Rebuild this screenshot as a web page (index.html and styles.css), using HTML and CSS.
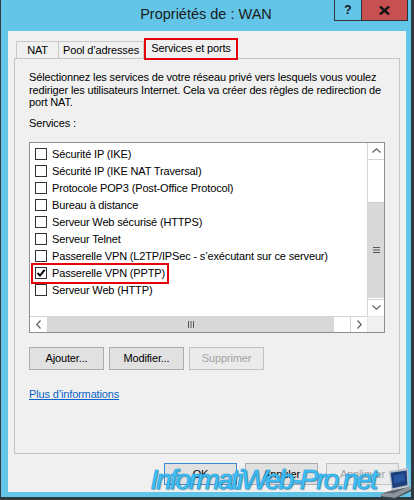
FILE: index.html
```html
<!DOCTYPE html>
<html lang="fr">
<head>
<meta charset="utf-8">
<title>Propriétés de : WAN</title>
<link rel="stylesheet" href="styles.css">
</head>
<body>
<div class="window">
  <div class="titlebar">
    <div class="tb-spacer"></div>
    <div class="title">Propriétés de : WAN</div>
    <div class="caption-btns">
      <div class="cbtn help">?</div>
      <div class="cbtn close">
        <svg width="11" height="9" viewBox="0 0 11 9"><path d="M1 0.5 L10 8.5 M10 0.5 L1 8.5" stroke="#141414" stroke-width="2.4" fill="none"/></svg>
      </div>
    </div>
  </div>

  <div class="client">
    <div class="tabs">
      <div class="tab tab-nat">NAT</div>
      <div class="tab tab-pool">Pool d’adresses</div>
      <div class="tab tab-active">Services et ports</div>
    </div>

    <div class="panel">
      <p class="desc">Sélectionnez les services de votre réseau privé vers lesquels vous voulez<br>rediriger les utilisateurs Internet. Cela va créer des règles de redirection de<br>port NAT.</p>
      <div class="label">Services :</div>

      <div class="listbox">
        <div class="list-main">
          <div class="list-items">
            <div class="row"><span class="item"><span class="cb"></span><span class="txt">Sécurité IP (IKE)</span></span></div>
            <div class="row"><span class="item"><span class="cb"></span><span class="txt">Sécurité IP (IKE NAT Traversal)</span></span></div>
            <div class="row"><span class="item"><span class="cb"></span><span class="txt">Protocole POP3 (Post-Office Protocol)</span></span></div>
            <div class="row"><span class="item"><span class="cb"></span><span class="txt">Bureau à distance</span></span></div>
            <div class="row"><span class="item"><span class="cb"></span><span class="txt">Serveur Web sécurisé (HTTPS)</span></span></div>
            <div class="row"><span class="item"><span class="cb"></span><span class="txt">Serveur Telnet</span></span></div>
            <div class="row"><span class="item"><span class="cb"></span><span class="txt">Passerelle VPN (L2TP/IPSec - s’exécutant sur ce serveur)</span></span></div>
            <div class="row"><span class="item item-hl"><span class="cb cb-checked"><svg width="10" height="10" viewBox="0 0 10 10"><path d="M1.5 5 L4 7.6 L8.6 1.8" stroke="#000" stroke-width="2" fill="none"/></svg></span><span class="txt">Passerelle VPN (PPTP)</span></span></div>
            <div class="row"><span class="item"><span class="cb"></span><span class="txt">Serveur Web (HTTP)</span></span></div>
          </div>
          <div class="vscroll">
            <div class="sb-btn sb-up"><svg width="9" height="5" viewBox="0 0 9 5"><path d="M0.5 4.5 L4.5 0.8 L8.5 4.5" stroke="#606060" stroke-width="1.2" fill="none"/></svg></div>
            <div class="sb-track-v">
              <div class="thumb-v"><svg width="7" height="6" viewBox="0 0 7 6"><path d="M0 0.5 H7 M0 3 H7 M0 5.5 H7" stroke="#555" stroke-width="1"/></svg></div>
            </div>
            <div class="sb-btn sb-down"><svg width="9" height="5" viewBox="0 0 9 5"><path d="M0.5 0.5 L4.5 4.2 L8.5 0.5" stroke="#606060" stroke-width="1.2" fill="none"/></svg></div>
          </div>
        </div>
        <div class="list-bottom">
          <div class="hscroll">
            <div class="sb-hbtn sb-left"><svg width="5" height="9" viewBox="0 0 5 9"><path d="M4.5 0.5 L0.8 4.5 L4.5 8.5" stroke="#606060" stroke-width="1.2" fill="none"/></svg></div>
            <div class="thumb-h"><svg width="6" height="7" viewBox="0 0 6 7"><path d="M0.5 0 V7 M3 0 V7 M5.5 0 V7" stroke="#555" stroke-width="1"/></svg></div>
            <div class="sb-htrack"></div>
            <div class="sb-hbtn sb-right"><svg width="5" height="9" viewBox="0 0 5 9"><path d="M0.5 0.5 L4.2 4.5 L0.5 8.5" stroke="#606060" stroke-width="1.2" fill="none"/></svg></div>
          </div>
          <div class="corner"></div>
        </div>
      </div>

      <div class="btnrow">
        <button class="btn">Ajouter...</button>
        <button class="btn">Modifier...</button>
        <button class="btn btn-disabled">Supprimer</button>
      </div>

      <a class="link" href="#">Plus d’informations</a>
    </div>

    <div class="footer">
      <button class="btn btn-foot btn-default">OK</button>
      <button class="btn btn-foot">Annuler</button>
      <button class="btn btn-foot btn-disabled">Appliquer</button>
    </div>
  </div>

  <div class="watermark">
    <span class="wm-text">InformatiWeb-Pro.net</span>
    <svg class="laptop" width="31" height="31" viewBox="0 0 32 32">
      <polygon points="9,3 29,0 30,19 12,23" fill="#b9c2cc"/>
      <polygon points="11,5 27.5,2.5 28.3,17.5 13,21" fill="#1d3f7a"/>
      <polygon points="14,8 25,6 25.5,13 15,16" fill="#2f64b3" opacity="0.7"/>
      <polygon points="0,27 12,23 31,19 32,22 15,31 1,29" fill="#8e959c"/>
      <polygon points="3,26 12,23.5 27,20.5 14,26" fill="#5b6066"/>
      <polygon points="1,29 15,31 32,22 32,24 15,32 1,30" fill="#4a4e53"/>
    </svg>
  </div>
</div>
</body>
</html>
```

FILE: styles.css
```css
* { box-sizing: border-box; }

html, body {
  margin: 0;
  padding: 0;
}

body {
  width: 414px;
  height: 500px;
  overflow: hidden;
  font-family: "Liberation Sans", Arial, sans-serif;
  font-size: 11px;
  letter-spacing: -0.15px;
  color: #000;
}

.window {
  position: relative;
  width: 414px;
  height: 500px;
  background: #63c6e8;
  border-left: 1px solid #2e3a40;
  border-right: 3px solid #2e3a40;
  border-bottom: 3px solid #2e3a40;
  display: flex;
  flex-direction: column;
}

/* Title bar */
.titlebar {
  height: 31px;
  flex: none;
  display: grid;
  grid-template-columns: 1fr auto 1fr;
  align-items: start;
}

.title {
  font-size: 14.5px;
  letter-spacing: 0;
  line-height: 29px;
  color: #1b1b1b;
}

.caption-btns {
  justify-self: end;
  margin-right: 3px;
  display: flex;
  border: 1px solid #2b3338;
  border-top: 0;
  height: 21px;
}

.cbtn {
  height: 20px;
  display: flex;
  align-items: center;
  justify-content: center;
}

.help {
  width: 27px;
  border-right: 1px solid #2b3338;
  font-weight: bold;
  font-size: 12px;
  letter-spacing: 0;
  color: #111;
}

.close {
  width: 45px;
  background: #c75050;
}

/* Client area */
.client {
  flex: 1;
  margin: 0 5px 5px 7px;
  background: #f0f0f0;
  padding: 7px 6px 0 6px;
  display: flex;
  flex-direction: column;
}

.tabs {
  display: flex;
  align-items: flex-end;
  padding-left: 2px;
  height: 20px;
  position: relative;
  z-index: 1;
}

.tab {
  height: 17px;
  border: 1px solid #c9c9c9;
  border-bottom: 0;
  background: #f0f0f0;
  display: flex;
  align-items: center;
  justify-content: center;
  color: #000;
}

.tab-nat { width: 43px; }

.tab-pool {
  width: 86px;
  margin-left: -1px;
}

.tab-active {
  width: 94px;
  height: 22px;
  margin-bottom: -2px;
  border: 2px solid #e5000c;
  background: #f0f0f0;
  padding-bottom: 2px;
}

.panel {
  height: 396px;
  border: 1px solid #c4c4c4;
  background: #f0f0f0;
  padding: 12px 14px 0 14px;
}

.desc {
  margin: 0;
  line-height: 12.5px;
}

.label {
  margin-top: 8px;
  line-height: 13px;
}

/* List box */
.listbox {
  margin-top: 12px;
  width: 356px;
  height: 191px;
  border: 1px solid #8d8f92;
  background: #fff;
  display: flex;
  flex-direction: column;
}

.list-main {
  height: 173px;
  display: flex;
}

.list-items {
  flex: 1;
  padding-top: 3px;
  overflow: hidden;
}

.row {
  height: 17px;
  display: flex;
  align-items: center;
  white-space: nowrap;
}

.item {
  display: inline-flex;
  align-items: center;
  height: 17px;
  padding: 0 2px;
  margin-left: 3px;
}

.item-hl {
  outline: 2px solid #e5000c;
}

.cb {
  width: 12px;
  height: 12px;
  border: 1px solid #333;
  background: #fff;
  flex: none;
  display: flex;
  align-items: center;
  justify-content: center;
}

.txt {
  margin-left: 5px;
}

.vscroll {
  width: 17px;
  border-left: 1px solid #d4d4d4;
  display: flex;
  flex-direction: column;
}

.sb-btn {
  height: 17px;
  display: flex;
  align-items: center;
  justify-content: center;
  background: #fff;
}

.sb-up { border-bottom: 1px solid #d4d4d4; }
.sb-down { border-top: 1px solid #d4d4d4; }

.sb-track-v {
  flex: 1;
  background: #fff;
  display: flex;
  flex-direction: column;
}

.thumb-v {
  margin-top: 42px;
  height: 96px;
  background: #d8d8d8;
  border-top: 1px solid #cfcfcf;
  display: flex;
  align-items: center;
  justify-content: center;
}

.list-bottom {
  height: 16px;
  display: flex;
}

.hscroll {
  flex: 1;
  display: flex;
  border-top: 1px solid #d4d4d4;
}

.sb-hbtn {
  width: 18px;
  display: flex;
  align-items: center;
  justify-content: center;
  background: #fff;
}

.sb-left { border-right: 1px solid #d4d4d4; }
.sb-right { width: 17px; border-left: 1px solid #d4d4d4; }

.thumb-h {
  width: 286px;
  background: #d8d8d8;
  display: flex;
  align-items: center;
  justify-content: center;
}

.sb-htrack {
  flex: 1;
  background: #fff;
}

.corner {
  width: 17px;
  background: #f0f0f0;
  border-top: 1px solid #e6e6e6;
  border-left: 1px solid #e6e6e6;
}

/* Buttons */
.btnrow {
  margin-top: 14px;
  display: flex;
  gap: 5px;
}

.btn {
  width: 75px;
  height: 23px;
  padding: 0;
  border: 1px solid #acacac;
  background: #e1e1e1;
  font-family: "Liberation Sans", Arial, sans-serif;
  font-size: 11px;
  letter-spacing: -0.15px;
  color: #000;
}

.btn-disabled {
  color: #a3a3a3;
  border-color: #c2c2c2;
  background: #ebebeb;
}

.link {
  display: block;
  width: max-content;
  margin-top: 18px;
  line-height: 13px;
  color: #0a64c8;
  text-decoration: underline;
}

.footer {
  display: flex;
  justify-content: flex-end;
  gap: 8px;
  padding-top: 9px;
  padding-right: 1px;
}

.btn-foot {
  width: 73px;
  height: 22px;
}

.btn-default {
  border-color: #3d8ad2;
}

/* Watermark overlay */
.watermark {
  position: absolute;
  right: 0;
  top: 466px;
  width: max-content;
  display: flex;
  align-items: flex-start;
  gap: 4px;
  white-space: nowrap;
}

.wm-text {
  flex: none;
  font-family: "Liberation Sans", Arial, sans-serif;
  font-style: italic;
  font-size: 28px;
  line-height: 28px;
  letter-spacing: -2px;
  color: #3fc4f8;
  -webkit-text-stroke: 0.6px #2ba6e2;
  text-shadow: 0 0 1px #176fa6, 1px 1px 1px rgba(10, 70, 120, 0.45);
}

.laptop {
  margin-top: 2px;
  flex: none;
}
```
